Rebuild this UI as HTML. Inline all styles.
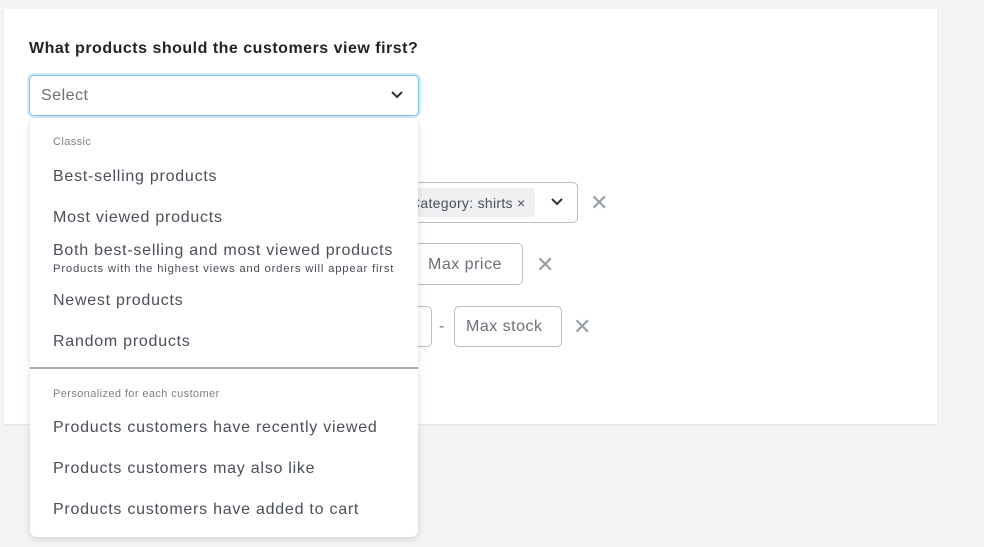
<!DOCTYPE html><html><head><style>
body{margin:0;width:984px;height:547px;background:#f3f4f6;font-family:"Liberation Sans",sans-serif;position:relative;overflow:hidden}
.a{position:absolute}
.card{left:4px;top:9px;width:933px;height:415px;background:#fff;box-shadow:0 1px 2px rgba(0,0,0,.08)}
.box{border:1px solid #b9bec6;border-radius:5px;background:#fff;box-sizing:border-box}
.ph{color:#6b7078;font-size:16px;letter-spacing:.5px}
.x{color:#9aa0a8;font-size:22px;line-height:22px}
.dd{left:30px;top:118px;width:388px;height:419px;background:#fff;border-radius:7px;box-shadow:0 2px 8px rgba(0,0,0,.15)}
.it{position:absolute;left:23px;color:#4a4f57;font-size:16px;letter-spacing:.75px}
.hd{position:absolute;left:23px;color:#7c8189;font-size:11px;letter-spacing:.4px}
</style></head><body>
<div class="a card"></div>
<div class="a" style="left:29px;top:40px;font-size:16px;font-weight:bold;color:#1f2328;letter-spacing:.5px">What products should the customers view first?</div>
<div class="a" style="left:29px;top:75px;width:390px;height:41px;border:1px solid #7cc0e8;border-radius:5px;box-shadow:0 0 0 2px #d3ebf8;box-sizing:border-box"></div>
<div class="a ph" style="left:41px;top:87px">Select</div>
<svg class="a" style="left:390px;top:90px" width="14" height="10"><path d="M2 2l5 5 5-5" stroke="#333" stroke-width="2" fill="none"/></svg>

<div class="a box" style="left:380px;top:182px;width:198px;height:41px"></div>
<div class="a" style="left:380px;top:188px;width:155px;height:29px;background:#eef0f2;border-radius:3px"></div>
<div class="a" style="left:410px;top:195px;font-size:14px;color:#4a4f57;letter-spacing:.3px">Category: shirts ×</div>
<svg class="a" style="left:550px;top:197px" width="14" height="10"><path d="M2 2l5 5 5-5" stroke="#333" stroke-width="2" fill="none"/></svg>
<div class="a x" style="left:590px;top:192px">✕</div>
<div class="a box" style="left:380px;top:243px;width:143px;height:42px"></div>
<div class="a ph" style="left:428px;top:256px">Max price</div>
<div class="a x" style="left:536px;top:254px">✕</div>
<div class="a box" style="left:380px;top:306px;width:52px;height:41px"></div>
<div class="a ph" style="left:439px;top:318px">-</div>
<div class="a box" style="left:454px;top:306px;width:108px;height:41px"></div>
<div class="a ph" style="left:466px;top:318px">Max stock</div>
<div class="a x" style="left:573px;top:316px">✕</div>

<div class="a dd">
<div class="hd" style="top:18px">Classic</div>
<div class="it" style="top:50px">Best-selling products</div>
<div class="it" style="top:91px">Most viewed products</div>
<div class="it" style="top:124px">Both best-selling and most viewed products</div>
<div class="hd" style="top:145px;color:#4a4f57;font-size:11.3px;letter-spacing:.8px">Products with the highest views and orders will appear first</div>
<div class="it" style="top:174px">Newest products</div>
<div class="it" style="top:215px">Random products</div>
<div class="a" style="left:0;top:249px;width:388px;height:2px;background:#a8adb5"></div>
<div class="hd" style="top:270px">Personalized for each customer</div>
<div class="it" style="top:301px">Products customers have recently viewed</div>
<div class="it" style="top:342px">Products customers may also like</div>
<div class="it" style="top:383px">Products customers have added to cart</div>
</div>
</body></html>
